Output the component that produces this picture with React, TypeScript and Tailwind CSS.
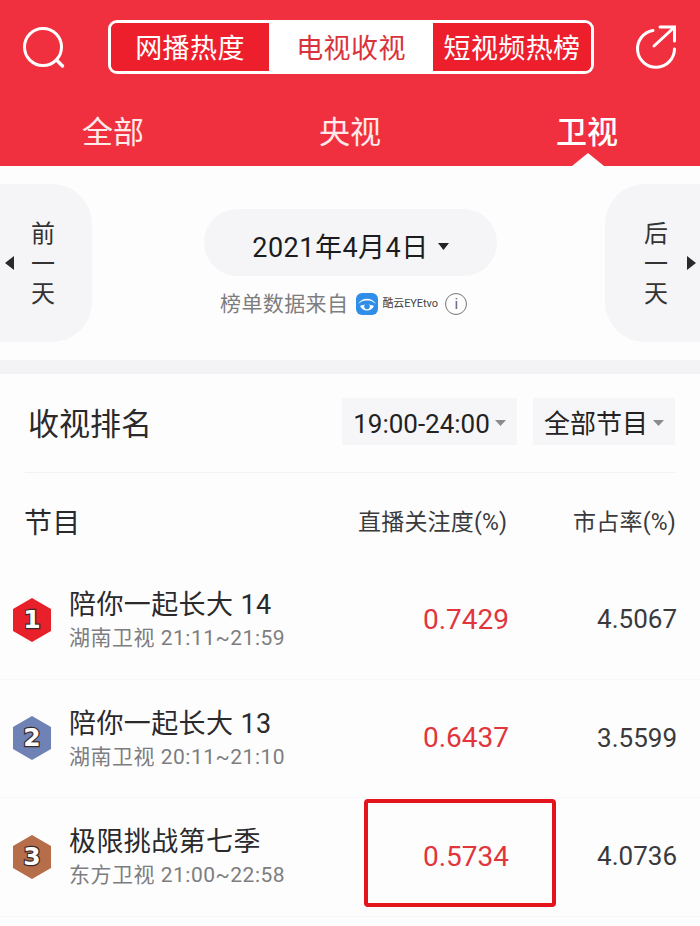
const rows = [
  { rank: 1, color: "#e8202a", name: "陪你一起长大 14", sub: "湖南卫视 21:11~21:59", value: "0.7429", share: "4.5067" },
  { rank: 2, color: "#6f82b5", name: "陪你一起长大 13", sub: "湖南卫视 20:11~21:10", value: "0.6437", share: "3.5599" },
  { rank: 3, color: "#b56d4a", name: "极限挑战第七季", sub: "东方卫视 21:00~22:58", value: "0.5734", share: "4.0736" },
];

function RankBadge({ rank, color }: { rank: number; color: string }) {
  return (
    <svg width="38" height="44" viewBox="0 0 38 44" className="shrink-0">
      <polygon points="19,0 38,11 38,33 19,44 0,33 0,11" fill={color} />
      <text
        x="19"
        y="30"
        textAnchor="middle"
        fontSize="25"
        fontWeight="900"
        fontFamily="'DejaVu Sans', sans-serif"
        fill="#fff"
        stroke="#3a2a2a"
        strokeWidth="2.4"
        paintOrder="stroke"
      >
        {rank}
      </text>
    </svg>
  );
}

function DayButton({ label, side }: { label: string[]; side: "left" | "right" }) {
  const isLeft = side === "left";
  return (
    <div
      className={`flex h-[158px] items-center bg-[#f5f5f7] ${
        isLeft ? "w-[92px] rounded-r-[40px] pl-[5px]" : "w-[95px] flex-row-reverse rounded-l-[40px] pr-[4px]"
      }`}
    >
      <svg width="9" height="14" viewBox="0 0 9 14" className={isLeft ? "" : "rotate-180"}>
        <polygon points="9,0 9,14 0,7" fill="#2a2a2a" />
      </svg>
      <div
        className={`flex flex-col items-center pt-[2px] text-[24px] leading-[30px] text-[#333] ${
          isLeft ? "ml-[17px]" : "mr-[19px]"
        }`}
      >
        {label.map((c, i) => (
          <span key={i}>{c}</span>
        ))}
      </div>
    </div>
  );
}

function Caret() {
  return (
    <svg width="11" height="6" viewBox="0 0 11 6" className="ml-[5px] mb-[3px]">
      <polygon points="0,0 11,0 5.5,6" fill="#8b8b8f" />
    </svg>
  );
}

export default function App() {
  return (
    <div className="h-[926px] w-[700px] overflow-hidden bg-[#fdfdfe] font-['Roboto','Noto_Sans_CJK_SC',sans-serif]">
      <header className="h-[166px] bg-[#f0303e]">
        <div className="flex h-[94px] items-center">
          <svg width="44" height="44" viewBox="0 0 44 44" className="ml-[21px] mt-[-1px]" fill="none" stroke="#fff">
            <circle cx="22" cy="22" r="18.5" strokeWidth="3" />
            <path d="M36 35.5 L41.5 41" strokeWidth="3.5" strokeLinecap="round" />
          </svg>
          <div className="ml-[43px] mt-[-1px] flex h-[54px] w-[486px] overflow-hidden rounded-[9px] border-[3px] border-white text-[27px] leading-none tracking-[0.4px]">
            <div className="flex w-[158px] items-center justify-center bg-[#ee1f2d] pt-[6px] text-white">网播热度</div>
            <div className="flex w-[164px] items-center justify-center bg-white pt-[6px] text-[#d8333c]">电视收视</div>
            <div className="flex flex-1 items-center justify-center whitespace-nowrap bg-[#ee1f2d] pt-[6px] text-white">
              短视频热榜
            </div>
          </div>
          <svg width="44" height="46" viewBox="0 0 44 46" className="ml-[40px] mt-[-1px]" fill="none" stroke="#fff" strokeWidth="3" strokeLinecap="round">
            <path d="M19 6.5 A18.5 18.5 0 1 0 40.5 25" />
            <path d="M20 22 L40 3.5 M26 3 H40.5 V17" />
          </svg>
        </div>
        <nav className="relative grid h-[72px] grid-cols-[226px_248px_226px] text-center text-[31px] leading-[78px] text-[#ffe9e9]">
          <span>全部</span>
          <span>央视</span>
          <span className="font-medium text-white">卫视</span>
          <span className="absolute bottom-0 left-[572px] h-0 w-0 border-x-[16px] border-b-[13px] border-x-transparent border-b-[#fdfdfe]" />
        </nav>
      </header>

      <section className="flex h-[194px] items-start justify-between pt-[18px]">
        <DayButton label={["前", "一", "天"]} side="left" />
        <div className="ml-[4px] flex w-[293px] flex-col items-center pt-[25px]">
          <div className="flex h-[67px] w-[293px] items-center justify-center rounded-[34px] bg-[#f5f5f7] pt-[11px] text-[27px] tracking-[0.5px] text-[#1c1c1e]">
            2021年4月4日
            <svg width="11" height="7" viewBox="0 0 11 7" className="mb-[3px] ml-[9px]">
              <polygon points="0,0 11,0 5.500,7" fill="#222" />
            </svg>
          </div>
          <div className="mt-[13px] flex items-center self-start pl-[16px] text-[21px] leading-[30px] tracking-[0.4px] text-[#7d7d80]">
            榜单数据来自
            <svg width="22" height="22" viewBox="0 0 22 22" className="ml-[8px]">
              <rect width="22" height="22" rx="6" fill="#2f8fe8" />
              <path d="M2 11 C6 4 16 4 20 11 C16 8 15 7.500 11 7.500 C7 7.500 6 8 2 11 Z" fill="#fff" />
              <path d="M4 13 C8 11 14 11 18 13 C15 19 7 19 4 13 Z" fill="#fff" />
              <circle cx="11" cy="13.500" r="2.800" fill="#2f8fe8" />
            </svg>
            <span className="ml-[4px] w-[55px] whitespace-nowrap text-[11px] tracking-[-0.1px] text-[#444]">酷云EYEtvo</span>
            <span className="ml-[8px] flex h-[22px] w-[22px] items-center justify-center rounded-full border border-[#777] text-[15px] leading-none text-[#666]">
              i
            </span>
          </div>
        </div>
        <DayButton label={["后", "一", "天"]} side="right" />
      </section>

      <div className="h-[14px] bg-[#f3f3f5]" />

      <section className="relative">
        <div className="mx-[25px] flex h-[99px] items-center border-b border-[#f2f2f4] pb-[3px]">
          <h2 className="ml-[3px] mt-[6px] text-[31px] font-normal leading-none text-[#2a2a2c]">收视排名</h2>
          <div className="ml-auto flex h-[47px] w-[175px] items-center justify-center bg-[#f6f6f8] pt-[6px] text-[26px] text-[#222]">
            19:00-24:00
            <Caret />
          </div>
          <div className="ml-[16px] flex h-[47px] w-[142px] items-center justify-center bg-[#f6f6f8] pt-[6px] text-[26px] text-[#222]">
            全部节目
            <Caret />
          </div>
        </div>

        <div className="flex h-[88px] items-center pl-[24px] pr-[24px] pt-[13px] text-[23px] tracking-[0.2px] text-[#3a3a3c]">
          <span className="w-[334px] text-[28px] text-[#2a2a2c]">节目</span>
          <span className="w-[150px] whitespace-nowrap">直播关注度(%)</span>
          <span className="ml-auto whitespace-nowrap">市占率(%)</span>
        </div>

        {rows.map((row) => (
          <div key={row.rank} className="flex h-[118.5px] items-center border-b border-[#f7f7f9] pl-[13px] pr-[23px]">
            <RankBadge rank={row.rank} color={row.color} />
            <div className="ml-[18px] w-[280px]">
              <div className="whitespace-nowrap text-[27px] leading-[36px] tracking-[0.4px] text-[#2a2a2c]">{row.name}</div>
              <div className="mt-[1px] whitespace-nowrap text-[21px] leading-[28px] tracking-[0.5px] text-[#7d7d80]">{row.sub}</div>
            </div>
            <span className="ml-auto text-[28px] text-[#e0363c]">{row.value}</span>
            <span className="ml-[88px] text-[26px] text-[#3a3a3c]">{row.share}</span>
          </div>
        ))}

        <div className="absolute left-[364px] top-[425px] h-[108px] w-[192px] rounded-[4px] border-[4px] border-[#e3141c]" />
      </section>
    </div>
  );
}
